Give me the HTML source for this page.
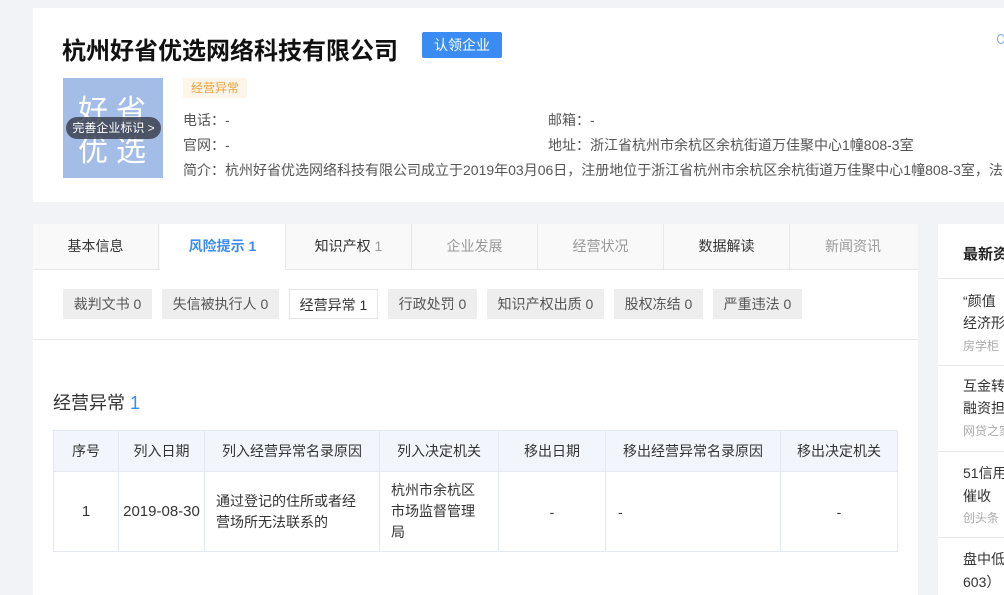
<!DOCTYPE html>
<html><head><meta charset="utf-8"><style>
*{margin:0;padding:0;box-sizing:border-box}
body{width:1004px;height:595px;overflow:hidden;background:#f2f3f7;font-family:"Liberation Sans","Noto Sans CJK SC",sans-serif;color:#333;position:relative;font-size:14px}
.abs{position:absolute;white-space:nowrap}
.card{position:absolute;background:#fff}
.tab{position:absolute;top:0;height:45px;line-height:45px;text-align:center;width:126px;border-right:1px solid #e8e8e8;background:#f9f9f9;color:#333}
.btn{position:absolute;top:289px;height:30px;line-height:30px;background:#eeeeee;color:#555;text-align:center;font-size:14px}
table{border-collapse:collapse;position:absolute;left:53px;top:430px;font-size:14px}
td,th{border:1px solid #e4e8ef;font-weight:normal;text-align:center;color:#333}
th{background:#f2f6fc;height:41px}
td{height:80px;background:#fff}
</style></head><body>
<div class="card" style="left:33px;top:8px;width:971px;height:194px"></div>
<div class="abs" style="left:62px;top:31px;font-size:24px;font-weight:bold;color:#111">杭州好省优选网络科技有限公司</div>
<div class="abs" style="left:422px;top:32px;width:80px;height:26px;background:#3a8cf3;color:#fff;border-radius:2px;text-align:center;line-height:26px;font-size:14px">认领企业</div>
<div class="abs" style="left:997px;top:34px;width:8px;height:10px;border:1.5px solid #6aa3ee;border-radius:50%"></div>
<div class="abs" style="left:63px;top:78px;width:100px;height:100px;background:#a4bde6;color:#fff;font-size:30px;line-height:40px;text-align:center;padding-top:14px;letter-spacing:8px;padding-left:6px">好省<br>优选</div>
<div class="abs" style="left:66px;top:117px;width:95px;height:22px;background:rgba(60,66,80,.85);border-radius:11px;color:#fff;font-size:12px;line-height:22px;text-align:center">完善企业标识 &gt;</div>
<div class="abs" style="left:183px;top:78px;width:64px;height:20px;background:#fdf5e9;color:#e9a23b;font-size:12px;line-height:20px;text-align:center;border-radius:2px">经营异常</div>
<div class="abs" style="left:183px;top:110px;color:#555">电话：-</div>
<div class="abs" style="left:183px;top:135px;color:#555">官网：-</div>
<div class="abs" style="left:548px;top:110px;color:#555">邮箱：-</div>
<div class="abs" style="left:548px;top:135px;color:#555">地址：浙江省杭州市余杭区余杭街道万佳聚中心1幢808-3室</div>
<div class="abs" style="left:183px;top:160px;color:#555">简介：杭州好省优选网络科技有限公司成立于2019年03月06日，注册地位于浙江省杭州市余杭区余杭街道万佳聚中心1幢808-3室，法</div>

<div class="card" style="left:33px;top:224px;width:885px;height:371px">
 <div style="position:absolute;left:0;top:0;width:885px;height:46px;border-bottom:1px solid #e8e8e8;background:#f9f9f9">
  <div class="tab" style="left:0">基本信息</div>
  <div class="tab" style="left:127px;background:#fff;color:#3a8cf3;font-weight:bold;height:46px">风险提示 1</div>
  <div class="tab" style="left:253px">知识产权 <span style="color:#999">1</span></div>
  <div class="tab" style="left:379px;color:#999">企业发展</div>
  <div class="tab" style="left:505px;color:#999">经营状况</div>
  <div class="tab" style="left:631px">数据解读</div>
  <div class="tab" style="left:757px;color:#999;border-right:none">新闻资讯</div>
 </div>
 <div style="position:absolute;left:0;top:115px;width:885px;border-top:1px solid #e8e8e8"></div>
</div>
<div class="btn" style="left:63px;width:89px">裁判文书 0</div>
<div class="btn" style="left:162px;width:117px">失信被执行人 0</div>
<div class="btn" style="left:289px;width:89px;background:#fff;border:1px solid #e5e5e5;color:#333">经营异常 1</div>
<div class="btn" style="left:388px;width:89px">行政处罚 0</div>
<div class="btn" style="left:487px;width:117px">知识产权出质 0</div>
<div class="btn" style="left:614px;width:89px">股权冻结 0</div>
<div class="btn" style="left:713px;width:89px">严重违法 0</div>
<div class="abs" style="left:53px;top:389px;font-size:18px;color:#333">经营异常 <span style="color:#3a8cf3">1</span></div>
<table>
<tr><th style="width:65px">序号</th><th style="width:86px">列入日期</th><th style="width:175px">列入经营异常名录原因</th><th style="width:119px">列入决定机关</th><th style="width:107px">移出日期</th><th style="width:175px">移出经营异常名录原因</th><th style="width:117px">移出决定机关</th></tr>
<tr><td style="font-size:15px">1</td><td style="font-size:15px">2019-08-30</td><td style="text-align:left;padding-left:11px;line-height:21px">通过登记的住所或者经<br>营场所无法联系的</td><td style="text-align:left;padding-left:11px;line-height:21px">杭州市余杭区<br>市场监督管理<br>局</td><td>-</td><td style="text-align:left;padding-left:12px">-</td><td>-</td></tr>
</table>

<div class="card" style="left:938px;top:224px;width:66px;height:371px">
 <div style="position:absolute;left:25px;top:19px;font-size:15px;font-weight:bold;color:#222;white-space:nowrap">最新资</div>
 <div style="position:absolute;left:0;top:54px;width:66px;border-top:1px solid #e8e8e8"></div>
 <div class="abs" style="left:25px;top:66px;line-height:22px">“颜值<br>经济形</div>
 <div class="abs" style="left:25px;top:113px;font-size:12px;color:#aaa">房学柜</div>
 <div style="position:absolute;left:0;top:141px;width:66px;border-top:1px solid #e8e8e8"></div>
 <div class="abs" style="left:25px;top:151px;line-height:22px">互金转<br>融资担</div>
 <div class="abs" style="left:25px;top:198px;font-size:12px;color:#aaa">网贷之家</div>
 <div style="position:absolute;left:0;top:227px;width:66px;border-top:1px solid #e8e8e8"></div>
 <div class="abs" style="left:25px;top:238px;line-height:23px">51信用<br>催收</div>
 <div class="abs" style="left:25px;top:285px;font-size:12px;color:#aaa">创头条</div>
 <div style="position:absolute;left:0;top:313px;width:66px;border-top:1px solid #e8e8e8"></div>
 <div class="abs" style="left:25px;top:324px;line-height:23px">盘中低<br>603）</div>
</div>
</body></html>
